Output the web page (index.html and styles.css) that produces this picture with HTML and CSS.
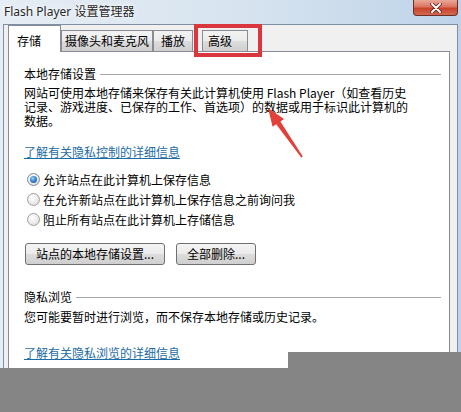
FILE: index.html
```html
<!DOCTYPE html>
<html lang="zh-CN">
<head>
<meta charset="utf-8">
<title>Flash Player 设置管理器</title>
<link rel="stylesheet" href="styles.css">
</head>
<body>
<div class="window">
  <div class="titlebar">
    <span class="title">Flash Player 设置管理器</span>
    <button class="close" aria-label="关闭">
      <svg width="12" height="10" viewBox="0 0 12 10"><path d="M2 1 L10 9 M10 1 L2 9" stroke="#5a2018" stroke-width="3.6" stroke-linecap="round"/><path d="M2 1 L10 9 M10 1 L2 9" stroke="#ffffff" stroke-width="2" stroke-linecap="round"/></svg>
    </button>
  </div>
  <div class="client">
    <div class="tabs">
      <div class="tab tab-active">存储</div>
      <div class="tab">摄像头和麦克风</div>
      <div class="tab tab-play">播放</div>
      <div class="tab tab-adv">高级</div>
    </div>
    <div class="panel">
      <div class="group-title"><span>本地存储设置</span><i class="rule"></i></div>
      <p class="desc">网站可使用本地存储来保存有关此计算机使用 Flash Player（如查看历史<br>记录、游戏进度、已保存的工作、首选项）的数据或用于标识此计算机的<br>数据。</p>
      <a class="link" href="#">了解有关隐私控制的详细信息</a>
      <div class="radios">
        <label class="radio"><span class="dot checked"></span>允许站点在此计算机上保存信息</label>
        <label class="radio"><span class="dot"></span>在允许新站点在此计算机上保存信息之前询问我</label>
        <label class="radio"><span class="dot"></span>阻止所有站点在此计算机上存储信息</label>
      </div>
      <div class="buttons">
        <button class="btn">站点的本地存储设置...</button>
        <button class="btn">全部删除...</button>
      </div>
      <div class="group-title group-2"><span>隐私浏览</span><i class="rule"></i></div>
      <p class="desc2">您可能要暂时进行浏览，而不保存本地存储或历史记录。</p>
      <a class="link link-second" href="#">了解有关隐私浏览的详细信息</a>
    </div>
  </div>
  <div class="highlight"></div>
  <svg class="arrow" width="461" height="412" viewBox="0 0 461 412">
    <polygon points="268,108 284,119 280.4,121.6 302.8,156.4 301.2,157.6 276.2,124.2 272.6,126.8" fill="#e4403a"/>
  </svg>
  <svg class="mask" width="461" height="60" viewBox="0 0 461 60">
    <polygon points="288,0 461,0 461,60 0,60 0,16 288,16" fill="#858585"/>
  </svg>
</div>
</body>
</html>
```
FILE: styles.css
```css
body {
  margin: 0;
  background: #ffffff;
  font-family: "Noto Sans CJK SC", "Noto Sans", sans-serif;
  font-size: 12px;
  color: #000;
}

.window {
  position: relative;
  width: 461px;
  height: 412px;
  overflow: hidden;
  background: linear-gradient(to right, #e6edf4 0%, #d6e3ef 55%, #bed3e9 100%);
}

.titlebar {
  height: 24px;
  display: flex;
  justify-content: space-between;
  align-items: flex-start;
}

.title {
  font-family: "Noto Sans", "Noto Sans CJK SC", sans-serif;
  font-size: 12px;
  line-height: 24px;
  padding-left: 4px;
  color: #262626;
  text-shadow: 0 0 6px #ffffff, 0 0 3px #ffffff;
}

.close {
  margin-right: 3px;
  width: 45px;
  height: 16px;
  padding: 0;
  border: 1px solid #6b2f28;
  border-top: none;
  border-radius: 0 0 4px 4px;
  background: linear-gradient(#eaa898 0%, #dc7560 45%, #c8432b 55%, #d26a50 100%);
  display: flex;
  align-items: center;
  justify-content: center;
}

.client {
  margin: 0 3px;
  height: 388px;
  box-sizing: border-box;
  border: 1px solid #7d8fa3;
  border-bottom: none;
  background: #f0f0f0;
  padding: 0 7px 0 4px;
}

.tabs {
  display: flex;
  align-items: flex-end;
  height: 26px;
}

.tab {
  height: 21px;
  box-sizing: border-box;
  border: 1px solid #898c95;
  border-bottom: none;
  background: linear-gradient(#f3f3f3 0%, #ebebeb 50%, #dddddd 51%, #cfcfcf 100%);
  padding: 3px 3px 0;
  line-height: 14px;
  white-space: nowrap;
}

.tab-active {
  position: relative;
  z-index: 1;
  height: 27px;
  width: 53px;
  margin-bottom: -1px;
  padding: 8px 0 0 8px;
  background: #ffffff;
}

.tab-play {
  padding: 3px 7px 0;
}

.tab-adv {
  margin-left: 9px;
  padding: 3px 15px 0 5px;
}

.panel {
  height: 400px;
  box-sizing: border-box;
  background: #ffffff;
  border: 1px solid #898c95;
  padding: 15px 8px 0 15px;
}

.group-title {
  display: flex;
  align-items: center;
  height: 14px;
  line-height: 14px;
}

.rule {
  flex: 1;
  height: 1px;
  margin-left: 4px;
  background: #a7a7a7;
}

.desc {
  margin: 5px 0 0;
  line-height: 14px;
  white-space: nowrap;
}

.link {
  display: block;
  width: fit-content;
  margin-top: 17px;
  line-height: 14px;
  color: #1d6ca6;
  text-decoration: underline;
}

.radios {
  margin-top: 10px;
}

.radio {
  display: flex;
  align-items: center;
  height: 20px;
}

.dot {
  position: relative;
  width: 13px;
  height: 13px;
  box-sizing: border-box;
  margin: 0 3px 0 3px;
  border-radius: 50%;
  border: 1px solid #a0a0a0;
  background: radial-gradient(circle at 40% 35%, #ffffff 0%, #e8e8e8 60%, #d2d2d2 100%);
}

.dot.checked {
  border-color: #7a8a9a;
}

.dot.checked::after {
  content: "";
  position: absolute;
  left: 2px;
  top: 2px;
  width: 7px;
  height: 7px;
  border-radius: 50%;
  background: radial-gradient(circle at 40% 35%, #9fd4fb 0%, #3a86d2 45%, #174f93 100%);
}

.buttons {
  display: flex;
  gap: 11px;
  margin-top: 14px;
  padding-left: 1px;
}

.btn {
  height: 22px;
  padding: 0 10px;
  border: 1px solid #707070;
  border-radius: 3px;
  background: linear-gradient(#f4f4f4 0%, #ebebeb 50%, #dddddd 51%, #cfcfcf 100%);
  font: inherit;
  line-height: 20px;
  color: #000;
}

.group-2 {
  margin-top: 25px;
}

.desc2 {
  margin: 6px 0 0;
  line-height: 14px;
}

.link-second {
  margin-top: 22px;
}

.highlight {
  position: absolute;
  left: 194px;
  top: 24px;
  width: 68px;
  height: 33px;
  box-sizing: border-box;
  border: 4px solid #d9363e;
}

.arrow {
  position: absolute;
  left: 0;
  top: 0;
  pointer-events: none;
}

.mask {
  position: absolute;
  left: 0;
  top: 352px;
}
```
